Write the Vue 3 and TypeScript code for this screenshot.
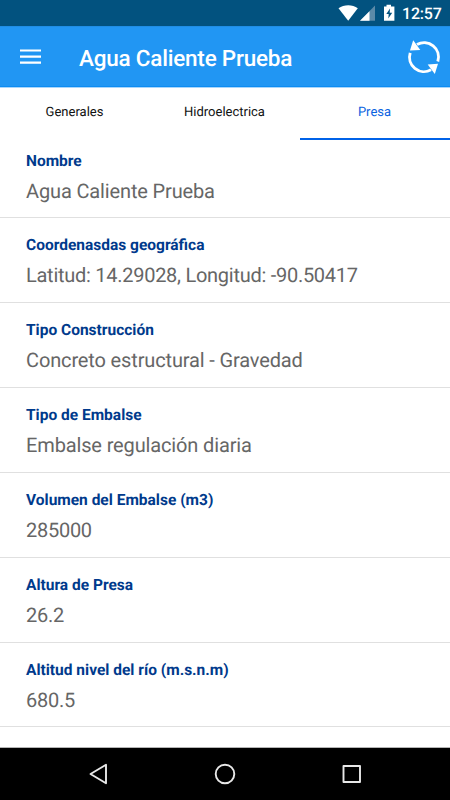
<script setup lang="ts">
interface Field {
  label: string
  value: string
}

const tabs: string[] = ['Generales', 'Hidroelectrica', 'Presa']
const activeTab = 'Presa'

const fields: Field[] = [
  { label: 'Nombre', value: 'Agua Caliente Prueba' },
  { label: 'Coordenasdas geográfica', value: 'Latitud: 14.29028, Longitud: -90.50417' },
  { label: 'Tipo Construcción', value: 'Concreto estructural - Gravedad' },
  { label: 'Tipo de Embalse', value: 'Embalse regulación diaria' },
  { label: 'Volumen del Embalse (m3)', value: '285000' },
  { label: 'Altura de Presa', value: '26.2' },
  { label: 'Altitud nivel del río (m.s.n.m)', value: '680.5' },
  { label: 'Altitud nivel máximo (m.s.n.m)', value: '' },
]

const isNumeric = (value: string): boolean => /\d/.test(value)
</script>

<template>
  <div class="screen">
    <div class="status">
      <svg class="status-icons" width="62" height="26" viewBox="0 0 62 26">
        <path d="M.5 8.2C6 4.1 14.500 4.100 19.800 8.200L10.200 20.800Z" fill="#fff" />
        <path d="M37 5.500V20.800H22Z" fill="#5b8aa8" />
        <path d="M31.500 11.300V20.800H22Z" fill="#fff" />
        <path d="M46 6.500H48.500V4.800H53V6.500H56.400V20.800H46Z" fill="#fff" />
        <path d="M52 8.500L48.300 14H50.700L50.300 18.500L54.200 12.700H51.700Z" fill="#02527f" />
      </svg>
      <span class="clock">12:57</span>
    </div>

    <header class="bar">
      <svg class="menu" width="22" height="18" viewBox="0 0 22 18">
        <path d="M0 2.500H21M0 8.600H21M0 14.700H21" stroke="#fff" stroke-width="2.200" />
      </svg>
      <h1 class="title">Agua Caliente Prueba</h1>
      <svg class="refresh" width="34" height="36" viewBox="0 0 34 36">
        <path d="M10 5.600A14.400 14.400 0 0 1 30.800 22.500" fill="none" stroke="#fff" stroke-width="2.900" />
        <path d="M3.200 13.900A14.400 14.400 0 0 0 24 30.800" fill="none" stroke="#fff" stroke-width="2.900" />
        <path d="M6.200 1.300L13.300 11L3 11.600Z" fill="#fff" />
        <path d="M27.800 35.100L20.700 25.400L31 24.800Z" fill="#fff" />
      </svg>
    </header>

    <nav class="tabs">
      <div v-for="tab in tabs" :key="tab" class="tab" :class="{ active: tab === activeTab }">
        <span>{{ tab }}</span>
      </div>
    </nav>

    <main class="list">
      <section v-for="field in fields" :key="field.label" class="row">
        <div class="label">{{ field.label }}</div>
        <div class="value" :class="{ numeric: isNumeric(field.value) }">{{ field.value }}</div>
      </section>
    </main>

    <footer class="nav">
      <svg width="450" height="52" viewBox="0 0 450 52" fill="none" stroke="#e8e8e8" stroke-width="1.900" stroke-linejoin="round">
        <path d="M106 16.700V35.200L90.500 26Z" />
        <circle cx="225" cy="26" r="9.300" />
        <rect x="343.500" y="18" width="16.500" height="16" />
      </svg>
    </footer>
  </div>
</template>

<style>
body {
  margin: 0;
}
</style>

<style scoped>
.screen {
  width: 450px;
  height: 800px;
  display: flex;
  flex-direction: column;
  overflow: hidden;
  background: #fff;
  font-family: Roboto, sans-serif;
  text-rendering: geometricPrecision;
}
.status {
  flex: none;
  height: 26px;
  display: flex;
  align-items: center;
  justify-content: flex-end;
  padding-right: 9px;
  background: #02527f;
}
.status-icons {
  margin-right: 2px;
}
.clock {
  width: 39px;
  padding-top: 2px;
  color: #fff;
  font-size: 16px;
  font-weight: 500;
  letter-spacing: -0.2px;
  line-height: 26px;
  white-space: nowrap;
}
.bar {
  flex: none;
  height: 61px;
  box-sizing: border-box;
  display: flex;
  align-items: center;
  padding: 0 9px 0 20px;
  background: #2196f3;
  border-top: 1px solid #1f8de5;
  border-bottom: 1px solid #0d8cf2;
}
.menu {
  margin-top: 1px;
}
.title {
  flex: 1;
  margin: 4px 0 0 37px;
  color: #fff;
  font-size: 22.5px;
  font-weight: 500;
  letter-spacing: -0.22px;
  line-height: 30px;
  white-space: nowrap;
}
.tabs {
  flex: none;
  height: 53px;
  box-sizing: border-box;
  display: grid;
  grid-template-columns: repeat(3, 1fr);
  border-top: 1px solid #a9d6fb;
}
.tab {
  box-sizing: border-box;
  padding: 15px 1px 0 0;
  text-align: center;
  color: #111;
  font-size: 13px;
  line-height: 20px;
}
.tab.active {
  color: #0a62e0;
  border-bottom: 2px solid #0062e8;
}
.list {
  flex: 1;
  min-height: 0;
  overflow: hidden;
  background: linear-gradient(#b4b4b4, #b4b4b4) bottom / 100% 1px no-repeat;
}
.row {
  box-sizing: border-box;
  height: 84.85px;
  padding: 17px 26px 0;
  border-bottom: 1.25px solid #e0e0e0;
}
.row:first-child {
  height: 78.4px;
  padding-top: 10.6px;
}
.label {
  color: #003a8c;
  font-size: 15.5px;
  font-weight: 700;
  line-height: 20px;
  white-space: nowrap;
}
.value {
  margin-top: 8px;
  color: #666;
  font-size: 20px;
  letter-spacing: -0.14px;
  line-height: 24px;
  white-space: nowrap;
}
.value.numeric {
  letter-spacing: -0.27px;
}
.row:last-child {
  padding-top: 17.5px;
}
.nav {
  flex: none;
  height: 52px;
  background: #000;
}
.nav svg {
  display: block;
}
</style>
